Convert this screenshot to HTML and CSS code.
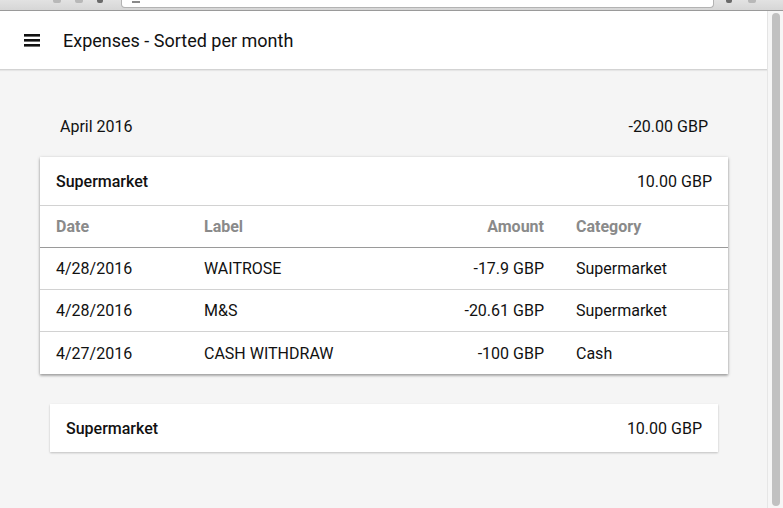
FILE: index.html
```html
<!DOCTYPE html>
<html lang="en">
<head>
<meta charset="utf-8">
<title>Expenses - Sorted per month</title>
<link rel="stylesheet" href="styles.css">
</head>
<body>
<div class="chrome">
  <div class="chrome-nav">
    <span class="nav-mark"></span>
    <span class="nav-mark"></span>
    <span class="nav-mark dark"></span>
  </div>
  <div class="address"><span class="addr-icon"></span></div>
  <div class="chrome-right">
    <span class="nav-mark dark"></span>
    <span class="nav-mark"></span>
  </div>
</div>
<div class="window">
  <div class="page">
    <header class="toolbar">
      <svg class="menu-icon" width="16" height="13" viewBox="0 0 16 13" aria-hidden="true">
        <rect x="0" y="0" width="16" height="2.6" fill="#111"/>
        <rect x="0" y="5" width="16" height="2.6" fill="#111"/>
        <rect x="0" y="10" width="16" height="2.6" fill="#111"/>
      </svg>
      <h1 class="title">Expenses - Sorted per month</h1>
    </header>
    <main class="content">
      <div class="month-row">
        <span>April 2016</span>
        <span>-20.00 GBP</span>
      </div>
      <section class="card expanded">
        <div class="card-head">
          <span class="card-title">Supermarket</span>
          <span>10.00 GBP</span>
        </div>
        <div class="grid-row head-row">
          <span>Date</span><span>Label</span><span class="amt">Amount</span><span class="cat">Category</span>
        </div>
        <div class="grid-row">
          <span>4/28/2016</span><span>WAITROSE</span><span class="amt">-17.9 GBP</span><span class="cat">Supermarket</span>
        </div>
        <div class="grid-row">
          <span>4/28/2016</span><span>M&amp;S</span><span class="amt">-20.61 GBP</span><span class="cat">Supermarket</span>
        </div>
        <div class="grid-row last">
          <span>4/27/2016</span><span>CASH WITHDRAW</span><span class="amt">-100 GBP</span><span class="cat">Cash</span>
        </div>
      </section>
      <section class="card collapsed">
        <div class="card-head">
          <span class="card-title">Supermarket</span>
          <span>10.00 GBP</span>
        </div>
      </section>
    </main>
  </div>
  <div class="scrollbar"><div class="thumb"></div></div>
</div>
</body>
</html>
```
FILE: styles.css
```css
* { box-sizing: border-box; }
html, body { margin: 0; padding: 0; }
body {
  width: 783px;
  height: 508px;
  overflow: hidden;
  font-family: Roboto, "Liberation Sans", sans-serif;
  font-size: 16px;
  color: rgba(0,0,0,0.87);
  background: #f5f5f5;
}
.chrome {
  height: 11px;
  background: linear-gradient(#e2e2e2, #d6d6d6);
  border-bottom: 1px solid #9a9a9a;
  display: flex;
  align-items: flex-start;
}
.chrome-nav {
  width: 121px;
  display: flex;
  justify-content: flex-end;
  gap: 14px;
  padding-right: 18px;
}
.nav-mark {
  width: 8px;
  height: 3px;
  background: #b8b8b8;
  border-radius: 0 0 2px 2px;
}
.nav-mark.dark { background: #6a6a6a; width: 6px; }
.address {
  width: 593px;
  height: 8px;
  background: #fff;
  border: 1px solid #b3b3b3;
  border-top: none;
  border-radius: 0 0 4px 4px;
  padding-left: 10px;
}
.addr-icon {
  display: block;
  width: 8px;
  height: 2px;
  margin-top: 1px;
  background: #8a8a8a;
}
.chrome-right {
  flex: 1;
  display: flex;
  gap: 16px;
  padding-left: 12px;
}
.window {
  display: flex;
  height: 497px;
}
.page {
  width: 768px;
  border-right: 1px solid #e6e6e6;
}
.toolbar {
  height: 59px;
  background: #fff;
  border-bottom: 1px solid #d3d3d3;
  box-shadow: 0 1px 1px rgba(0,0,0,0.06);
  display: flex;
  align-items: center;
  padding-left: 24px;
  gap: 23px;
}
.menu-icon { display: block; margin-top: 1px; }
.title {
  margin: 0;
  font-size: 18px;
  font-weight: 400;
  color: #111;
}
.content {
  padding: 45px 49px 0 50px;
}
.month-row {
  display: flex;
  justify-content: space-between;
  height: 24px;
  line-height: 24px;
  padding: 0 10px 0 10px;
  margin-bottom: 18px;
  color: #111;
}
.card {
  background: #fff;
}
.card.expanded {
  margin: 0 -10px;
  box-shadow: 0 1px 3px rgba(0,0,0,0.35), 0 2px 2px rgba(0,0,0,0.12);
}
.card.collapsed {
  margin-top: 30px;
  box-shadow: 0 1px 2px rgba(0,0,0,0.22);
}
.card-head {
  height: 48px;
  display: flex;
  align-items: center;
  justify-content: space-between;
  padding: 0 16px;
  color: #111;
}
.expanded .card-head { height: 49px; border-bottom: 1px solid #d2d2d2; }
.card-title { font-weight: 500; }
.grid-row {
  display: grid;
  grid-template-columns: 148px 1fr 161px 184px;
  height: 42px;
  align-items: center;
  padding-left: 16px;
  border-bottom: 1px solid #d2d2d2;
  color: #111;
}
.grid-row.head-row {
  border-bottom-color: #9a9a9a;
  color: #8a8a8a;
  font-weight: 700;
}
.grid-row.last { border-bottom: none; }
.amt { text-align: right; }
.cat { padding-left: 32px; }
.scrollbar {
  width: 15px;
  background: #f6f6f6;
  padding: 2px 2px 2px 4px;
}
.thumb {
  height: 100%;
  width: 8px;
  background: #c1c1c1;
  border-radius: 4px;
}
```
